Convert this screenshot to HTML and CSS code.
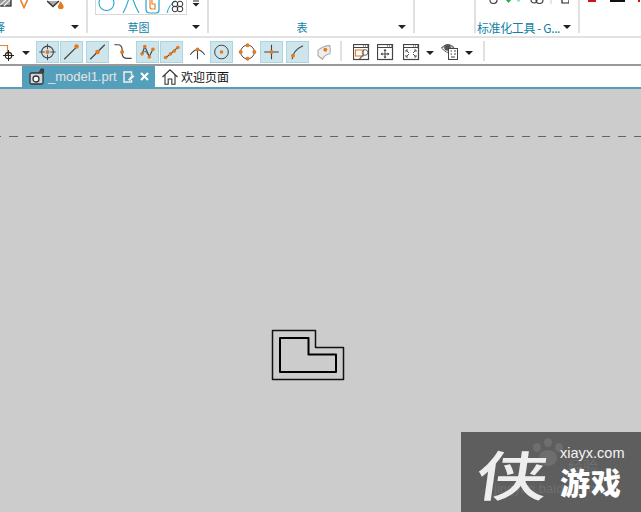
FILE: index.html
```html
<!DOCTYPE html>
<html lang="zh">
<head>
<meta charset="utf-8">
<title>_model1.prt</title>
<link rel="stylesheet" href="styles.css">
</head>
<body>
<div class="app">
  <header class="ribbon">
    <section class="group g1">
      <div class="group-top top1">
        <svg class="i-a" width="12" height="7" viewBox="0 0 12 7"><rect x="-2" y="-2" width="13" height="8" fill="#9a9a9a" stroke="#222" stroke-width="1.2"/><path d="M0 5L6 0M4 6L10 0" stroke="#eee" stroke-width="1.2"/></svg>
        <svg class="i-b" width="10" height="9" viewBox="0 0 10 9"><path d="M1.500 0L5 7.500L8.500 0" fill="#fff" stroke="#e8802a" stroke-width="1.600"/></svg>
        <svg class="i-c" width="18" height="9" viewBox="0 0 18 9"><path d="M0 1L6 6.500L12 1" fill="#aaa" stroke="#333" stroke-width="1.300"/><path d="M13.500 1L16 5A2.800 2.800 0 1 1 11.500 5Z" fill="#e37a20"/></svg>
      </div>
      <div class="group-foot"><span class="label clip">择</span><i class="arrow"></i></div>
    </section>
    <section class="group g2">
      <div class="group-top top2">
        <div class="gallery">
          <svg width="90" height="14" viewBox="0 0 90 14">
            <ellipse cx="10.500" cy="3" rx="7.500" ry="7.500" fill="none" stroke="#1ea7cf" stroke-width="1.100"/>
            <path d="M27 13Q31 6 33 -2M43 13Q39 6 36.500 -2" fill="none" stroke="#1ea7cf" stroke-width="1.100"/>
            <path d="M50 -1V9Q50 13 54 13H60Q63 13 63 10V-1" fill="none" stroke="#1ea7cf" stroke-width="1.200"/>
            <path d="M54 -1V7Q54 9 56 9H59V4H56V-1" fill="none" stroke="#e8802a" stroke-width="1.200"/>
            <path d="M71 13Q73 4 80 1" fill="none" stroke="#1ea7cf" stroke-width="1"/>
            <g fill="none" stroke="#333" stroke-width="1"><circle cx="79" cy="4" r="2.800"/><circle cx="84" cy="4" r="2.800"/><circle cx="79" cy="9" r="2.800"/><circle cx="84" cy="9" r="2.800"/></g>
          </svg>
        </div>
        <svg class="more" width="8" height="7" viewBox="0 0 8 7"><path d="M1 1H7" stroke="#222"/><path d="M0.500 3H7.500L4 6.500Z" fill="#222"/></svg>
      </div>
      <div class="group-foot"><span class="label">草图</span><i class="arrow"></i></div>
    </section>
    <section class="group g3">
      <div class="group-top"></div>
      <div class="group-foot"><span class="label">表</span><i class="arrow"></i></div>
    </section>
    <section class="group g4"></section>
    <section class="group g5">
      <div class="group-top top5">
        <svg width="80" height="4" viewBox="0 0 80 4">
          <path d="M1 0A3.500 3.500 0 0 0 8 0" fill="none" stroke="#444" stroke-width="1.200"/>
          <path d="M17 0H22L19.500 3Z" fill="#19b43a"/>
          <path d="M28 0H31V1.500H28Z" fill="#6fe8e8"/>
          <path d="M42 0A3 3 0 0 0 48 0M47 0A3 3 0 0 0 54 0" fill="none" stroke="#444" stroke-width="1.200"/>
          <path d="M62 0V4" stroke="#ccc"/>
          <path d="M73 0V3H80V0" fill="none" stroke="#222" stroke-width="1.200"/>
        </svg>
      </div>
      <div class="group-foot"><span class="label wide">标准化工具 - G...</span><i class="arrow"></i></div>
    </section>
    <section class="group g6">
      <div class="bits"><i class="bit red"></i><i class="bit black"></i><i class="bit red small"></i></div>
    </section>
  </header>

  <nav class="toolbar">
    <svg class="first" width="18" height="22" viewBox="0 0 18 22"><path d="M0 4.500H7.500V14" fill="none" stroke="#e8802a" stroke-width="1.200"/><circle cx="8.500" cy="14.500" r="3.200" fill="none" stroke="#222" stroke-width="1.200"/><path d="M3 14.500H14M8.500 9V20" stroke="#222"/></svg>
    <i class="arrow bar-arrow"></i>
    <button class="tool on lead"><svg viewBox="0 0 22 22"><circle cx="11" cy="11" r="6.500" fill="none" stroke="#444" stroke-width="1.200"/><path d="M11 2V8M11 14V20M2 11H8M14 11H20" stroke="#444"/><circle cx="11" cy="11" r="2.200" fill="#e37a20"/></svg></button>
    <button class="tool on"><svg viewBox="0 0 22 22"><path d="M3 19L17 5" stroke="#444" stroke-width="1.300"/><circle cx="16.500" cy="5" r="2.500" fill="#e37a20"/></svg></button>
    <button class="tool on gap"><svg viewBox="0 0 22 22"><path d="M3 19L19 3" stroke="#444" stroke-width="1.300"/><circle cx="11" cy="11" r="2.500" fill="#e37a20"/></svg></button>
    <button class="tool gap"><svg viewBox="0 0 22 22"><path d="M1 3H5Q9 3 9.500 8V13Q10 18 15 18H20" fill="none" stroke="#444" stroke-width="1.300"/><circle cx="9.500" cy="11" r="2.200" fill="#e37a20"/></svg></button>
    <button class="tool on"><svg viewBox="0 0 22 22"><path d="M5 13L8 5L13 16L17 8" fill="none" stroke="#444" stroke-width="1.200"/><path d="M5 13L8.500 10L13 16" fill="none" stroke="#444" stroke-width=".8"/><g fill="#e37a20"><circle cx="5" cy="13" r="2"/><circle cx="8" cy="5" r="2"/><circle cx="13" cy="16.500" r="2"/><circle cx="17" cy="8" r="2"/></g></svg></button>
    <button class="tool on"><svg viewBox="0 0 22 22"><path d="M4 18L18 6" stroke="#444" stroke-width="1.200"/><g fill="#e37a20"><circle cx="4.500" cy="17" r="2"/><circle cx="10" cy="13" r="2"/><circle cx="14" cy="10" r="2"/><circle cx="18" cy="6" r="2"/></g></svg></button>
    <button class="tool gap"><svg viewBox="0 0 22 22"><path d="M3 14Q11 3 19 14M11 8V19" fill="none" stroke="#444" stroke-width="1.200"/><circle cx="11" cy="8" r="2" fill="#e37a20"/></svg></button>
    <button class="tool on"><svg viewBox="0 0 22 22"><circle cx="11" cy="11" r="7.500" fill="none" stroke="#444" stroke-width="1.100"/><circle cx="11" cy="11" r="2" fill="#e37a20"/></svg></button>
    <button class="tool gap"><svg viewBox="0 0 22 22"><circle cx="11" cy="11" r="7.500" fill="none" stroke="#444" stroke-width="1.100"/><g fill="#e37a20"><circle cx="11" cy="3.500" r="2.200"/><circle cx="11" cy="18.500" r="2.200"/><circle cx="3.500" cy="11" r="2.200"/><circle cx="18.500" cy="11" r="2.200"/></g></svg></button>
    <button class="tool on"><svg viewBox="0 0 22 22"><path d="M3 11H19M11 3V19" stroke="#444" stroke-width="1.200"/><circle cx="11" cy="11" r="2.200" fill="#e37a20"/></svg></button>
    <button class="tool on gap"><svg viewBox="0 0 22 22"><path d="M5 19Q6 9 17 4" fill="none" stroke="#444" stroke-width="1.200"/><circle cx="6" cy="15" r="2.200" fill="#e37a20"/></svg></button>
    <button class="tool gap"><svg viewBox="0 0 22 22"><path d="M5 9Q11 4 18 4Q19 10 18 13Q12 14 10 19L5 15Z" fill="#eee" stroke="#aaa" stroke-width="1.200"/><circle cx="13" cy="8.500" r="2.200" fill="#e37a20"/></svg></button>
    <span class="sep first-sep"></span>
    <svg class="view v1" width="17" height="17" viewBox="0 0 17 17"><rect x=".5" y=".5" width="15" height="15" fill="#fff" stroke="#444" stroke-width="1.200"/><path d="M1 3.500H15" stroke="#444"/><path d="M10 2H11M12 2H13M14 2H15" stroke="#444"/><rect x="2.500" y="6" width="8" height="6" fill="#fff" stroke="#e8802a" stroke-width="1.100"/><circle cx="12" cy="8.500" r="2.800" fill="none" stroke="#666"/><path d="M10 11L6.500 15" stroke="#666" stroke-width="1.200"/></svg>
    <svg class="view v2" width="17" height="17" viewBox="0 0 17 17"><rect x=".5" y=".5" width="15" height="15" fill="#fff" stroke="#444" stroke-width="1.200"/><path d="M1 3.500H15M8 5.500V14M4 10H12" stroke="#444"/><path d="M10 2H11M12 2H13M14 2H15" stroke="#444"/><path d="M8 5L6.500 7H9.500ZM8 14.500L6.500 12.500H9.500ZM3.500 10L5.500 8.500V11.500ZM12.500 10L10.500 8.500V11.500Z" fill="#444"/></svg>
    <svg class="view v3" width="17" height="17" viewBox="0 0 17 17"><rect x=".5" y=".5" width="15" height="15" fill="#fff" stroke="#444" stroke-width="1.200"/><path d="M1 3.500H15" stroke="#444"/><path d="M10 2H11M12 2H13M14 2H15" stroke="#444"/><path d="M3 8V6H5M11 6H13V8M3 11V13H5M11 13H13V11M3.500 6.500L6 9M12.500 6.500L10 9M3.500 12.500L6 10M12.500 12.500L10 10" fill="none" stroke="#555"/></svg>
    <i class="arrow a1"></i>
    <svg class="view v4" width="17" height="18" viewBox="0 0 17 18"><path d="M0.500 6Q7 -1 13 6" fill="#ddd" stroke="#666" stroke-width="1.200"/><path d="M0.500 6Q6 12 9 10" fill="none" stroke="#666"/><circle cx="6.500" cy="5.500" r="3.300" fill="#555"/><rect x="7.500" y="6.500" width="9" height="11" fill="#fff" stroke="#444"/><path d="M9.500 9H11M13 9H15M9.500 12H11M13 12H15M10 15H14" stroke="#444"/></svg>
    <i class="arrow a2"></i>
    <span class="sep last-sep"></span>
  </nav>

  <div class="tabs">
    <div class="tab active">
      <svg width="16" height="17" viewBox="0 0 16 17"><rect x="1" y="5" width="13" height="11" rx="1.500" fill="#cfd8dc" stroke="#333" stroke-width="1.300"/><circle cx="7" cy="11" r="3" fill="#fff" stroke="#333" stroke-width="1.300"/><path d="M10 5L12 1H14.500V5" fill="#444" stroke="#333"/></svg>
      <span class="tab-name">_model1.prt</span>
      <svg class="mini" width="12" height="12" viewBox="0 0 12 12"><path d="M8.500 4V1H1V11H8.500V9" fill="none" stroke="#eee" stroke-width="1.500"/><path d="M5 8.500L9.500 3.500L11.500 5.500L6.500 10Z" fill="#eee"/></svg>
      <svg class="close" width="9" height="9" viewBox="0 0 9 9"><path d="M1 1L8 8M8 1L1 8" stroke="#fff" stroke-width="2"/></svg>
    </div>
    <div class="tab plain">
      <svg width="16" height="16" viewBox="0 0 16 16"><path d="M.5 8L8 .8L15.500 8M3 6V15.200H6.200V10H9.800V15.200H13V6" fill="none" stroke="#333" stroke-width="1.100"/></svg>
      <span class="tab-home">欢迎页面</span>
    </div>
  </div>

  <main class="canvas">
    <div class="datum"></div>
    <svg class="sketch" width="74" height="52" viewBox="0 0 74 52">
      <path class="outer" d="M1.500 1.500H44.500V18.500H72.500V50.500H1.500Z"/>
      <path class="inner" d="M9 9H37.500V25.500H65V43H9Z"/>
    </svg>
    <aside class="mark">
      <span class="ghost paw"></span>
      <span class="ghost pad p1"></span><span class="ghost pad p2"></span><span class="ghost pad p3"></span>
      <span class="ghost-text gt1">jingyan.baidu.com</span>
      <span class="ghost-text gt2">经验</span>
      <span class="big">侠</span>
      <div class="brand">
        <span class="domain">xiayx.com</span>
        <span class="game">游戏</span>
      </div>
    </aside>
  </main>
</div>
</body>
</html>
```
FILE: styles.css
```css
* { box-sizing: border-box; }
html, body { margin: 0; padding: 0; background: #fff; }
.app {
  width: 641px; height: 512px; overflow: hidden;
  display: flex; flex-direction: column;
  font-family: "Noto Sans CJK SC", "Liberation Sans", sans-serif;
}

/* Ribbon */
.ribbon { height: 38px; flex: none; display: flex; background: #fff; border-bottom: 2px solid #e2e2e2; padding-bottom: 3px; }
.group { height: 33px; border-right: 2px solid #e0e0e0; display: flex; flex-direction: column; position: relative; }
.g1 { width: 88px; }
.g2 { width: 121px; }
.g3 { width: 206px; }
.g4 { width: 61px; }
.g5 { width: 104px; }
.g6 { flex: 1; border-right: 0; }
.group-top { height: 21px; flex: none; display: flex; align-items: flex-start; }
.top1 svg { display: block; flex: none; }
.i-b { margin-left: 7px; }
.i-c { margin-left: 18px; }
.top2 { padding-left: 7px; }
.gallery { width: 92px; height: 15px; border: 1px solid #d8d8d8; border-top: 0; flex: none; }
.gallery svg { display: block; }
.more { margin-left: 5px; flex: none; }
.top5 { padding-left: 13px; }
.group-foot { height: 13px; flex: none; display: flex; align-items: center; }
.label { flex: 1; min-width: 0; text-align: center; font-size: 11px; line-height: 13px; color: #0f7fa6; white-space: nowrap; }
.label.clip { text-align: left; margin-left: -6px; }
.label.wide { text-align: left; margin-left: 1px; font-size: 12px; letter-spacing: -.4px; }
.arrow { display: block; flex: none; width: 0; height: 0; border-left: 4px solid transparent; border-right: 4px solid transparent; border-top: 4px solid #222; }
.group-foot .arrow { margin: 0 7px 2px 3px; }
.g5 .group-foot .arrow { margin: 0 7px 2px 0; }
.bits { display: flex; align-items: flex-start; }
.bit { display: block; height: 2px; }
.bit.red { width: 8px; margin-left: 8px; background: #d01414; }
.bit.black { width: 15px; margin-left: 14px; background: #111; }
.bit.small { width: 2px; margin-left: 13px; }

/* Toolbar */
.toolbar { height: 28px; flex: none; display: flex; align-items: flex-start; padding-top: 3px; background: #fff; border-bottom: 2px solid #999; }
.first { flex: none; margin-left: 0; display: block; }
.bar-arrow { margin: 10px 0 0 4px; }
.tool { width: 23px; height: 22px; margin: 0 0 0 1px; padding: 0; flex: none; background: none; border: 1px solid transparent; display: block; }
.tool svg { display: block; width: 21px; height: 20px; }
.tool.on { background: #cde5eb; border-color: #a9d6e2; }
.tool.lead { margin-left: 6px; }
.tool.gap { margin-left: 3px; }
.sep { display: block; flex: none; width: 2px; height: 20px; background: #e0e0e0; }
.first-sep { margin-left: 5px; }
.view { display: block; flex: none; margin-top: 3px; }
.v1 { margin-left: 11px; }
.v2 { margin-left: 7px; }
.v3 { margin-left: 9px; }
.a1 { margin: 10px 0 0 6px; }
.v4 { margin: 1px 0 0 7px; }
.a2 { margin: 10px 0 0 7px; }
.last-sep { margin-left: 10px; }

/* Tabs */
.tabs { height: 23px; flex: none; display: flex; padding-left: 22px; background: #fff; border-bottom: 2px solid #549fbc; }
.tab { height: 21px; display: flex; align-items: center; }
.tab.active { width: 133px; background: #549fbc; padding-left: 7px; }
.tab.active svg { flex: none; }
.tab-name { margin-left: 3px; width: 74px; font: 13px/21px "Liberation Sans", sans-serif; color: #e4e4e4; white-space: nowrap; }
.mini { margin-left: 1px; }
.close { margin-left: 5px; }
.tab.plain { padding-left: 7px; }
.tab-home { margin-left: 3px; font-size: 12px; line-height: 21px; color: #111; }

/* Canvas */
.canvas { flex: 1; position: relative; background: #cccccc; overflow: hidden; }
.datum { height: 1px; margin-top: 47px; background: repeating-linear-gradient(90deg, #666 0 8px, transparent 8px 16px) 10px 0; }
.sketch { position: absolute; left: 271px; top: 240px; }
.sketch path { fill: none; stroke-linejoin: round; }
.outer { stroke: #111; stroke-width: 1.5; }
.inner { stroke: #000; stroke-width: 2; }

/* Watermark */
.mark { position: absolute; left: 461px; top: 343px; width: 180px; height: 80px; background: #5e5e5e; display: flex; padding-left: 20px; overflow: hidden; }
.big { font: 500 64px/80px "Noto Sans CJK SC", sans-serif; color: #eeeeee; width: 77px; flex: none; transform: scale(1.12, .84) skewX(-6deg); transform-origin: 32px 40px; position: relative; }
.brand { display: flex; flex-direction: column; margin-left: 2px; position: relative; }
.domain { margin-top: 11px; font: 14.500px/20px "Liberation Sans", sans-serif; color: #f4f4f4; }
.game { margin-top: 0; font: 900 30px/36px "Noto Sans CJK SC", sans-serif; color: #fff; letter-spacing: 1px; }
.ghost { position: absolute; background: #6e6e6e; border-radius: 50%; }
.paw { left: 78px; top: 18px; width: 18px; height: 16px; }
.pad { width: 8px; height: 9px; }
.p1 { left: 72px; top: 11px; }
.p2 { left: 83px; top: 6px; }
.p3 { left: 94px; top: 11px; }
.ghost-text { position: absolute; color: #6f6f6f; white-space: nowrap; }
.gt1 { left: 33px; top: 49px; font: 13px/16px "Liberation Sans", sans-serif; }
.gt2 { left: 107px; top: 26px; font-size: 15px; line-height: 16px; }
```
